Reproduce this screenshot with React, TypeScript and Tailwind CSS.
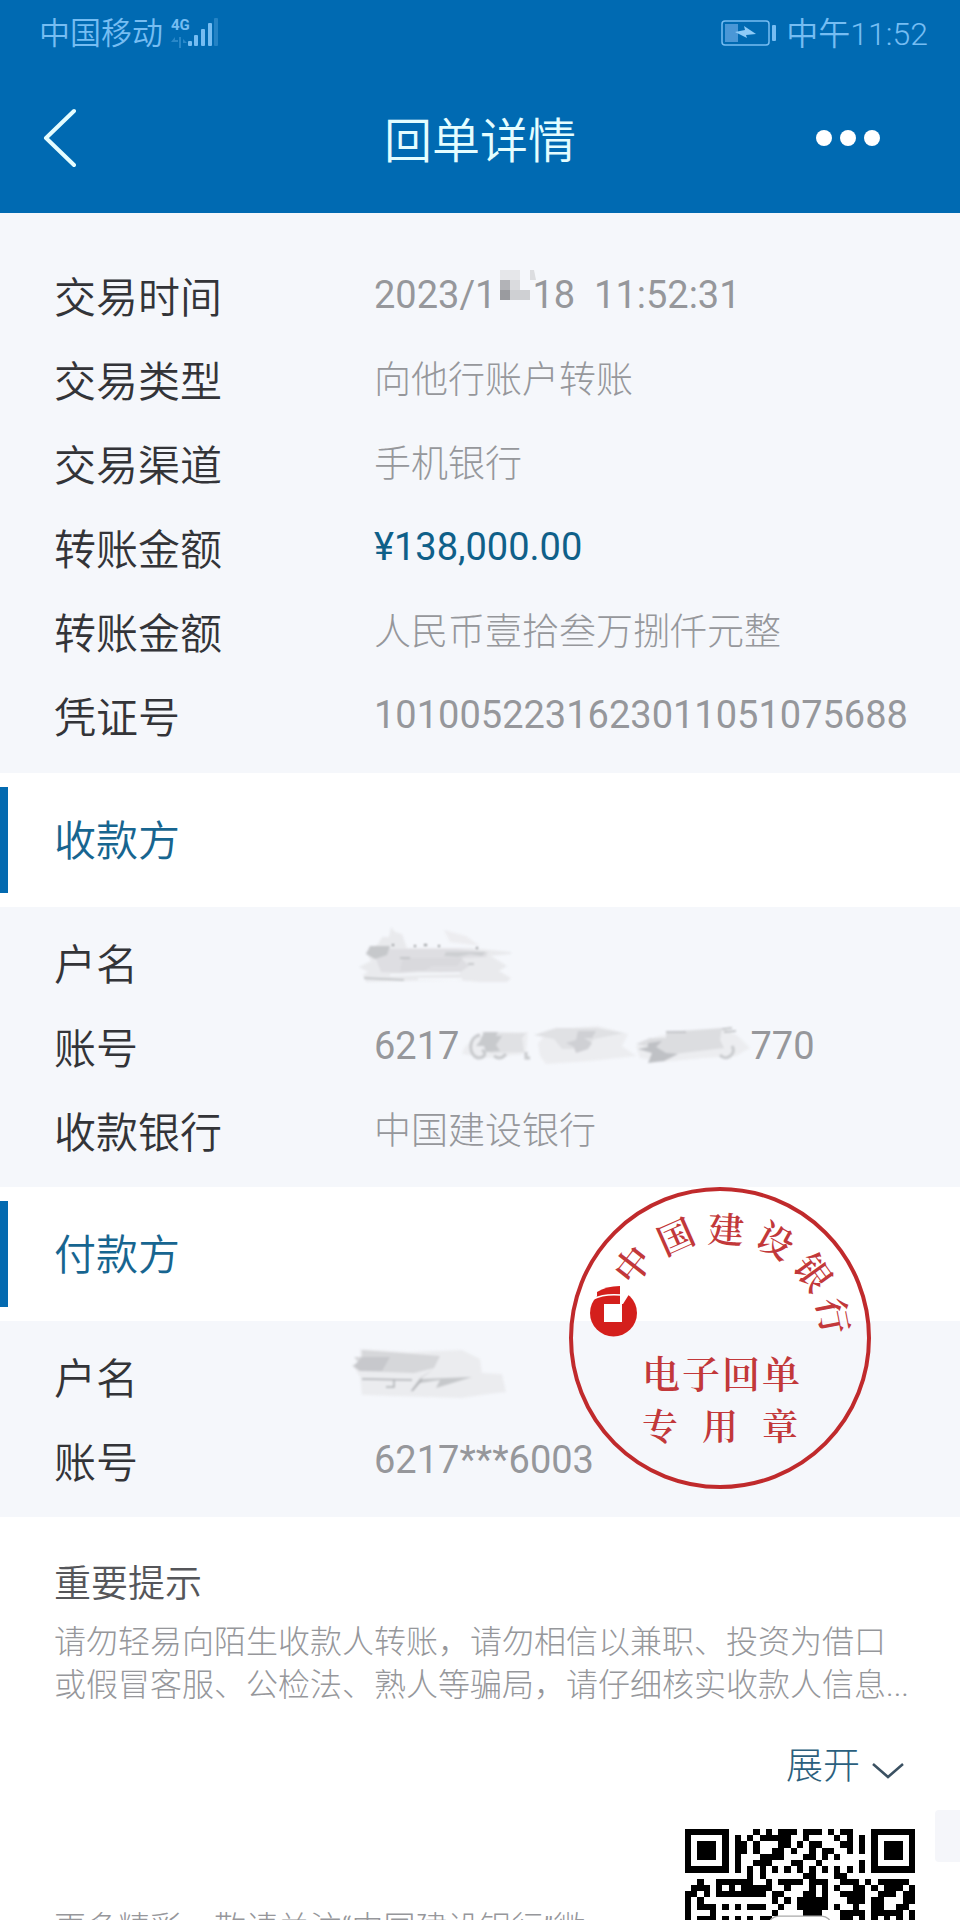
import React from 'react'

const details = [
  { label: '交易时间', value: 'time' },
  { label: '交易类型', value: '向他行账户转账' },
  { label: '交易渠道', value: '手机银行' },
  { label: '转账金额', value: 'amount' },
  { label: '转账金额', value: '人民币壹拾叁万捌仟元整' },
  { label: '凭证号', value: 'voucher' },
];

const qrRows = [
  '#######....#.#.###.###.#.##...#######',
  '#.....#.#.#.#####..#....#.#.#.#.....#',
  '#.###.#.##.#...##.#.##...##.#.#.###.#',
  '#.###.#.##.#..##.#..#.##..#.#.#.###.#',
  '#.###.#.#...####...##.#.#.....#.###.#',
  '#.....#.#..###...##..#......#.#.....#',
  '#######.#.#.#.#.#.#.#.#.#.#.#.#######',
  '..........#.#......##...##...........',
  '..#..######..#.####.###..###.#.#####.',
  '.###.#.#.#####..#...#.#.#..##.#.###.#',
  '##.#.########.##...##.#..####..###.##',
  '#.#...........#.#.#####...###.##...##',
  '#.###.#.#.###..#..#####.#..#..##..##.',
  '#...#.........#....###...####.#####.#',
  '#.###.#.#.#.##...........##.#.#.#.#.#',
  '#.#.#.##.#..#............#.##.##.#.##',
];

const Row = ({ label, children }: { label: string; children: React.ReactNode }) => (
  <div className="flex h-21 items-center">
    <dt className="w-80 shrink-0 pt-0.5 text-[42px] leading-[48px] font-[350] text-[#333438]">{label}</dt>
    <dd className="flex items-center whitespace-pre pb-0.5 text-[37px] leading-[48px] text-[#96979b]">{children}</dd>
  </div>
);

const PartyTitle = ({ title }: { title: string }) => (
  <div className="flex h-[134px] items-center bg-white">
    <span className="h-[106px] w-2 bg-[#046ab0]" />
    <h2 className="pt-1 pl-[46px] text-[42px] leading-[48px] font-[350] text-[#176590]">{title}</h2>
  </div>
);

const SignalIcon = () => (
  <svg className="ml-2 h-8 w-12" viewBox="0 0 48 32" fill="#76bdf2">
    <text x="0" y="13" fontFamily="Roboto" fontSize="15" fontWeight="700">4G</text>
    <path d="M0 25l4-5v3h3v2zM8 20h2v11h-2zM12 22l4 4h-4z" opacity=".35" />
    <rect x="17" y="24" width="4" height="5" rx="1" />
    <rect x="23" y="18" width="4" height="11" rx="1" />
    <rect x="30" y="12" width="4" height="17" rx="1" />
    <rect x="37" y="6" width="4" height="23" rx="1" />
    <rect x="43" y="1" width="4" height="28" rx="1" opacity=".3" />
  </svg>
);

const BatteryIcon = () => (
  <svg className="mr-2.5 h-[26px] w-[55px]" viewBox="0 0 55 26" fill="none">
    <rect x="1" y="1" width="47" height="24" rx="3" stroke="#76bdf2" strokeWidth="1.5" />
    <rect x="4" y="4" width="13" height="18" fill="#4a97d6" />
    <path d="M14 12l10-2-1-4 12 8-10 1 1 3z" fill="#8ecbf7" />
    <rect x="51" y="5" width="4" height="16" rx="1" fill="#76bdf2" />
  </svg>
);

const DateMosaic = () => (
  <svg className="-mt-5 -mr-1 ml-1 h-[30px] w-[36px]" viewBox="0 0 36 30">
    <path d="M0 0h20v10H0z" fill="#e6e7ea" />
    <path d="M0 10h10v10H0z" fill="#b2b3b7" />
    <path d="M0 20h10v10H0z" fill="#9a9b9f" />
    <path d="M10 10h10v10H10z" fill="#dadbde" />
    <path d="M10 20h20v10H10z" fill="#cfd0d3" />
    <path d="M30 0h4l2 10h-6z" fill="#dcdde0" />
  </svg>
);

const PayeeSmudge = () => (
  <svg className="-mt-5 -ml-4 h-14 w-[156px] blur-[1px]" viewBox="0 0 156 56">
    <path d="M86 4l22 6 14 10-30-4z" fill="#ededf0" />
    <path d="M8 26l12-8 4-7h7l2-10 4 5 7 2 5 14 64 0 40 4v2l-20 2 16 10-8 5 12 7-6 6-50-4-50 1-39 1-3-7 5-3-9-5 12-6z" fill="#e9eaed" />
    <path d="M14 23h84l32 3-2 5-25 1 8 8-10 7-40-2-18 2-20-1-5-13-10-5 8-3z" fill="#dedee2" />
    <path d="M12 20h20l-3 9-12 4-9-5z" fill="#c6c8cb" />
    <path d="M45 32h60l-6 8H74l-8 5H42z" fill="#d9d9dd" />
    <path d="M88 26h40l-4 4-12-2-12 3-14-1z" fill="#cdcfd2" />
    <path d="M6 52l40 2M42 32h10M110 38h6" stroke="#bcbec1" strokeWidth="1.5" />
    <path d="M34 19h2M56 20h2M66 19h3M80 20h2M118 22h2" stroke="#8f9194" strokeWidth="2" />
    <path d="M32 49l70-2M60 53h44" stroke="#f5f7fb" strokeWidth="2" />
  </svg>
);

const PayerSmudge = () => (
  <svg className="-mt-2 -ml-[22px] h-[50px] w-[156px] blur-[1px]" viewBox="0 0 156 50">
    <path d="M8 0l50 3 52-2 18 9 2 14 20 1 4 18-18 2-26 4-100-3-2-18-6-10 6-6z" fill="#ebecef" />
    <path d="M10 1l78 6-6 12-20 5-54-2-8-5 6-4-4-5h8z" fill="#d6d7da" />
    <path d="M10 8h28l-8 14H8l-6-5z" fill="#c7c8cc" />
    <path d="M82 20l-14 10 52-2-36 11 4-8-20 3-10 9 10-14z" fill="#c6c8cb" />
    <path d="M10 30l50 1M34 38h8v-8M60 42l10-12" fill="none" stroke="#b0b2b6" strokeWidth="1.5" />
  </svg>
);

const AccountSmudge = () => (
  <svg className="h-10 w-[291px] blur-[1px]" viewBox="0 0 289 40">
    <path d="M4 22l12-12 52-4-2 22-40 4-24-4zM78 18l10-14 50-4 30 8-6 12 14 10-46 5-44 3-6-8zM176 20l22-10 66-8 14 8 12 12-14 8-32 2-42 4-22-4z" fill="#ecedf0" />
    <path d="M22 6l44 1-4 5 2 14-34 1zM96 2h40l28 5-30 6-10 10h-22l-8-10-20-4z" fill="#e0e1e4" />
    <path d="M24 6h14l-2 4h6l-6 9 4 6-14 1-2-6h-8l4-5z" fill="#c8cacd" />
    <path d="M118 5h18l-4 7h-8l8 5-4 6-12 4-2-6-8-4 10-3z" fill="#cfd0d4" />
    <path d="M206 6l56-4-2 12 4 8-50 6-8 4-14-2 4-8-20-4 14-6h16z" fill="#dcdde0" />
    <path d="M188 17l14-2-6 6 10 6 12 1-14 7-16 2 4-10-14-4 10-2z" fill="#bfc1c5" />
    <path d="M262 3l10-1M264 6l12-1M206 6h20" stroke="#b9bbbe" strokeWidth="1.5" />
    <path d="M20 9c-12 2-12 20-2 23 8 0 8-6 4-8M34 30c4 3 8 3 12-2M66 26v6h4M272 20c5 8-6 16-12 9" fill="none" stroke="#c8cacd" strokeWidth="3" />
  </svg>
);

const arcChars = [
  { char: '中', x: 64, y: 78, angle: -52 },
  { char: '国', x: 107, y: 50, angle: -24 },
  { char: '建', x: 157, y: 43, angle: 3 },
  { char: '设', x: 206, y: 54, angle: 29 },
  { char: '银', x: 244, y: 86, angle: 54 },
  { char: '行', x: 264, y: 129, angle: 79 },
];

const BankSeal = () => (
  <svg
    className="absolute top-0 right-[89px] h-[302px] w-[302px]"
    viewBox="0 0 302 302"
    fill="#c2383a"
    fontFamily='"Noto Serif CJK SC", "Noto Sans CJK SC", serif'
    fontWeight="600"
    textAnchor="middle"
  >
    <circle cx="151" cy="151" r="149" fill="none" stroke="#c02a2c" strokeWidth="4" />
    {arcChars.map((c) => (
      <text key={c.char} x={c.x} y={c.y + 13} fontSize="36" transform={`rotate(${c.angle} ${c.x} ${c.y})`}>{c.char}</text>
    ))}
    {/* bank emblem */}
    <circle cx="44.5" cy="126" r="23.5" fill="#d41f1c" />
    <path d="M28 105q9-6 23-6v10H28z" fill="#d41f1c" />
    <path d="M51 95h17l-9 14-5 8h-3zM35 117h18v18H35z" fill="#fff" />
    <path d="M24 112c8-4 17-5 28-4" fill="none" stroke="#fff" strokeWidth="1.5" />
    {['电', '子', '回', '单'].map((c, i) => (
      <text key={c} x={92 + i * 40} y="201" fontSize="38">{c}</text>
    ))}
    {['专', '用', '章'].map((c, i) => (
      <text key={c} x={91 + i * 60} y="253" fontSize="36">{c}</text>
    ))}
  </svg>
);

const QrCode = () => (
  <svg className="h-[230px] w-[230px] shrink-0" viewBox="0 0 37 37" shapeRendering="crispEdges">
    {qrRows.map((row, y) =>
      row.split('').map((cell, x) => (cell === '#' ? <rect key={`${x}-${y}`} x={x} y={y} width="1" height="1" /> : null))
    )}
    <rect x="13.5" y="14" width="10" height="10" rx="1.5" fill="#fff" stroke="#aaa" strokeWidth=".2" shapeRendering="auto" />
  </svg>
);

const App = () => {
  return (
    <div className="relative h-screen overflow-hidden bg-white font-['Roboto','Noto_Sans_CJK_SC',sans-serif] font-light">
      <header className="bg-[#006ab2]">
        <div className="flex h-[66px] items-center justify-between pr-8 pl-[39px] text-[31px] font-[350] text-[#76bdf2]">
          <div className="flex items-center">
            <span className="pt-0.5">中国移动</span>
            <SignalIcon />
          </div>
          <div className="flex items-center">
            <BatteryIcon />
            <span className="pt-0.5 text-[32px]">中午11:52</span>
          </div>
        </div>
        <div className="grid h-[147px] grid-cols-3 items-center px-10 pb-1">
          <button aria-label="返回" className="justify-self-start">
            <svg className="h-[60px] w-9" viewBox="0 0 36 60" fill="none" stroke="#e4fdff" strokeWidth="4" strokeLinecap="round" strokeLinejoin="round">
              <path d="M34 3L6 30l28 27" />
            </svg>
          </button>
          <h1 className="pt-2 text-center text-[48px] leading-[56px] font-[350] text-[#e4fdff]">回单详情</h1>
          <button aria-label="更多" className="flex gap-2 justify-self-end pr-10">
            <span className="size-4 rounded-full bg-white" />
            <span className="size-4 rounded-full bg-white" />
            <span className="size-4 rounded-full bg-white" />
          </button>
        </div>
      </header>

      <main>
        <dl className="bg-[#f5f7fb] pt-[43px] pb-[13px] pl-[54px]">
          {details.map((item, i) => (
            <Row key={i} label={item.label}>
              {item.value === 'time' ? (
                <span className="flex items-center pb-1 text-[38px] font-normal">2023/1<DateMosaic />18  11:52:31</span>
              ) : item.value === 'amount' ? (
                <span className="block pb-1 text-[38px] font-normal text-[#0f6089]">¥138,000.00</span>
              ) : item.value === 'voucher' ? (
                <span className="block pb-1 text-[38px] font-normal">1010052231623011051075688</span>
              ) : (
                item.value
              )}
            </Row>
          ))}
        </dl>

        <section>
          <PartyTitle title="收款方" />
          <dl className="bg-[#f5f7fb] pt-4 pb-3 pl-[54px]">
            <Row label="户名"><PayeeSmudge /></Row>
            <Row label="账号">
              <span className="flex items-center pb-1 text-[38px] font-normal">6217<AccountSmudge />770</span>
            </Row>
            <Row label="收款银行">中国建设银行</Row>
          </dl>
        </section>

        <section className="relative">
          <PartyTitle title="付款方" />
          <dl className="bg-[#f5f7fb] pt-4 pb-3 pl-[54px]">
            <Row label="户名"><PayerSmudge /></Row>
            <Row label="账号"><span className="block pb-1 text-[38px] font-normal">6217***6003</span></Row>
          </dl>
          <BankSeal />
        </section>

        <section className="pt-11 pr-12 pl-[54px]">
          <h3 className="text-[37px] leading-[48px] font-[350] text-[#55565a]">重要提示</h3>
          <p className="pt-3 text-[32px] leading-[43px] text-[#96979b]">
            请勿轻易向陌生收款人转账，请勿相信以兼职、投资为借口或假冒客服、公检法、熟人等骗局，请仔细核实收款人信息...
          </p>
          <button className="mt-9 mr-2 ml-auto flex items-center gap-3 text-[37px] leading-[48px] text-[#2b5f7d]">
            展开
            <svg className="mt-2 h-4 w-8" viewBox="0 0 32 16" fill="none" stroke="#3b5162" strokeWidth="2.5">
              <path d="M1 1l15 13L31 1" />
            </svg>
          </button>
        </section>

        <section className="flex justify-between pt-[38px] pr-[45px] pl-[54px]">
          <p className="pt-[78px] text-[32px] leading-[43px] text-[#96979b]">更多精彩，敬请关注“中国建设银行”微</p>
          <QrCode />
        </section>
      </main>

      <aside className="absolute right-0 bottom-[58px] h-[52px] w-[25px] rounded-l bg-[#f5f6fa]" />
    </div>
  )
}

export default App
